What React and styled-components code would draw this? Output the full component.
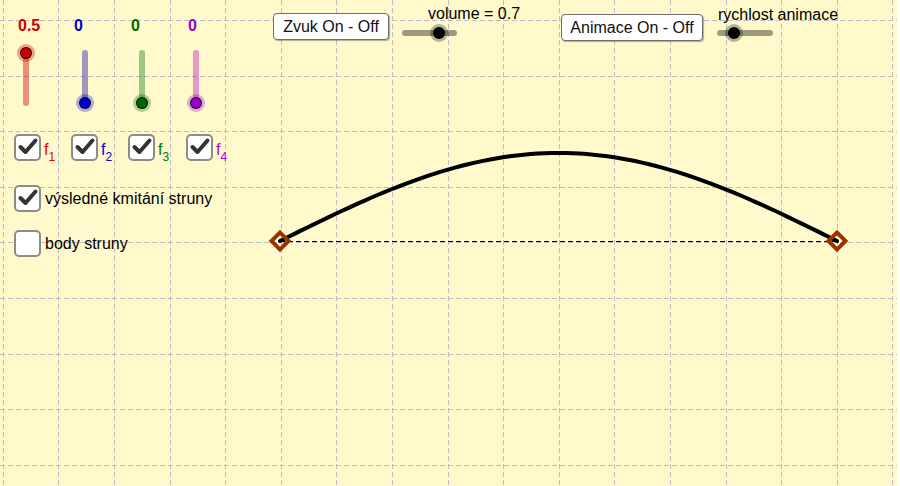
import React from "react";
import styled, { createGlobalStyle } from "styled-components";

const Global = createGlobalStyle`
  html, body { margin: 0; padding: 0; background: #ffffff; }
  body { font-family: "Liberation Sans", Arial, sans-serif; }
`;

const BG = "#FFF9CC";
const W = 897;
const H = 486;

const Stage = styled.div`
  position: relative;
  width: ${W}px;
  height: ${H}px;
  background: ${BG};
  overflow: hidden;
  font-family: "Liberation Sans", Arial, sans-serif;
  color: #000;
`;

const Canvas = styled.svg`
  position: absolute;
  left: 0;
  top: 0;
  width: ${W}px;
  height: ${H}px;
  display: block;
`;

const Layout = styled.div`
  position: relative;
  display: flex;
  align-items: flex-start;
`;

const LeftPanel = styled.div`
  width: 273px;
  flex: none;
  display: flex;
  flex-direction: column;
`;

const SliderRow = styled.div`
  display: flex;
  padding-left: 18px;
  padding-top: 17px;
`;

const SliderCol = styled.div`
  width: ${(p) => p.$w}px;
  display: flex;
  flex-direction: column;
  align-items: flex-start;
`;

const ValueLabel = styled.div`
  font-size: 16px;
  font-weight: bold;
  line-height: 18px;
  color: ${(p) => p.$color};
`;

const VTrack = styled.div`
  position: relative;
  margin-top: 15px;
  margin-left: ${(p) => p.$x}px;
  width: 6px;
  height: 56px;
  border-radius: 3px;
  background: ${(p) => p.$track};
`;

const HTrack = styled.div`
  position: relative;
  margin-top: ${(p) => p.$top}px;
  width: ${(p) => p.$w}px;
  height: 6px;
  border-radius: 3px;
  background: rgba(0, 0, 0, 0.38);
`;

const Thumb = styled.div`
  position: absolute;
  width: 12px;
  height: 12px;
  box-sizing: border-box;
  border-radius: 50%;
  background: ${(p) => p.$color};
  border: 1px solid rgba(0, 0, 0, 0.8);
  box-shadow: 0 0 0 3px ${(p) => p.$halo};
`;

const FRow = styled.div`
  display: flex;
  padding-left: 14px;
  margin-top: 28px;
`;

const CheckItem = styled.div`
  display: flex;
  align-items: ${(p) => (p.$top ? "flex-start" : "center")};
  gap: ${(p) => p.$gap || 3}px;
  width: ${(p) => (p.$w ? `${p.$w}px` : "auto")};
  padding-left: ${(p) => p.$pl || 0}px;
  margin-top: ${(p) => p.$mt || 0}px;
`;

const Box = styled.div`
  width: 27px;
  height: 27px;
  box-sizing: border-box;
  border: 2px solid #8d8d88;
  border-radius: 5px;
  background: #ffffff;
  flex: none;
  display: flex;
  align-items: center;
  justify-content: center;
`;

const CheckText = styled.span`
  font-size: 16px;
  line-height: 18px;
  white-space: nowrap;
  color: #000;
`;

const FLabel = styled.span`
  font-size: 16px;
  line-height: 18px;
  margin-top: 7px;
  color: ${(p) => p.$color};
  white-space: nowrap;
`;

const Sub = styled.sub`
  font-size: 12px;
  line-height: 1;
  vertical-align: -6px;
`;

const Toolbar = styled.div`
  display: flex;
  align-items: flex-start;
`;

const Button = styled.button`
  margin-top: ${(p) => p.$top}px;
  width: ${(p) => p.$w}px;
  height: 27px;
  padding: 0;
  box-sizing: border-box;
  border: 1px solid #6e6e6e;
  border-radius: 4px;
  background: #ffffff;
  box-shadow: 1px 1px 1px rgba(0, 0, 0, 0.3);
  font-family: "Liberation Sans", Arial, sans-serif;
  font-size: 16px;
  line-height: 18px;
  color: #111;
  flex: none;
`;

const HGroup = styled.div`
  display: flex;
  flex-direction: column;
  align-items: flex-start;
  width: ${(p) => p.$w}px;
  margin-left: ${(p) => p.$ml}px;
  flex: none;
`;

const HLabel = styled.div`
  font-size: 16px;
  line-height: 18px;
  margin-top: ${(p) => p.$top}px;
  margin-left: ${(p) => p.$left}px;
  white-space: nowrap;
`;

const CheckSvg = styled.svg`
  margin: -2px;
  display: block;
`;

const Check = () => (
  <CheckSvg width="27" height="27" viewBox="0 0 27 27">
    <path
      d="M6.5 13 L11.5 18 L21.5 6.5"
      fill="none"
      stroke="#333333"
      strokeWidth="4"
      strokeLinecap="round"
      strokeLinejoin="round"
    />
  </CheckSvg>
);

const sliders = [
  { label: "0.5", color: "#CC0000", track: "rgba(204,0,0,0.42)", halo: "rgba(204,0,0,0.35)", w: 56, x: 5, frac: 1 },
  { label: "0", color: "#0000CC", track: "rgba(0,0,160,0.38)", halo: "rgba(0,0,204,0.3)", w: 57, x: 8, frac: 0 },
  { label: "0", color: "#006600", track: "rgba(0,120,0,0.38)", halo: "rgba(0,102,0,0.3)", w: 57, x: 8, frac: 0 },
  { label: "0", color: "#9900CC", track: "rgba(190,0,180,0.38)", halo: "rgba(153,0,204,0.3)", w: 56, x: 5, frac: 0 },
];

const fChecks = [
  { n: "1", color: "#DD0000", w: 57 },
  { n: "2", color: "#0000DD", w: 57 },
  { n: "3", color: "#007700", w: 58 },
  { n: "4", color: "#AA00DD", w: 58 },
];

function VSlider({ s }) {
  const top = 3 + (1 - s.frac) * 50 - 6;
  return (
    <SliderCol $w={s.w}>
      <ValueLabel $color={s.color}>{s.label}</ValueLabel>
      <VTrack $x={s.x} $track={s.track}>
        <Thumb $color={s.color} $halo={s.halo} style={{ left: -3, top }} />
      </VTrack>
    </SliderCol>
  );
}

function HSlider({ label, w, frac, groupW, ml, labelTop, labelLeft, trackTop }) {
  const left = 3 + frac * (w - 6) - 6;
  return (
    <HGroup $w={groupW} $ml={ml}>
      <HLabel $top={labelTop} $left={labelLeft}>{label}</HLabel>
      <HTrack $w={w} $top={trackTop}>
        <Thumb $color="#000" $halo="rgba(0,0,0,0.28)" style={{ left, top: -3 }} />
      </HTrack>
    </HGroup>
  );
}

function Drawing() {
  const vx = [];
  for (let k = 0; k <= 16; k++) vx.push(Math.round(2.7 + 55.6 * k) + 0.5);
  const hy = [];
  for (let k = 0; k <= 8; k++) hy.push(Math.round(20 + 55.6 * k) + 0.5);
  const N = 80;
  const pts = [];
  for (let i = 0; i <= N; i++) {
    const x = 280 + (557 * i) / N;
    const y = 241 - 88 * Math.sin((Math.PI * i) / N);
    pts.push(`${x.toFixed(2)},${y.toFixed(2)}`);
  }
  return (
    <Canvas viewBox={`0 0 ${W} ${H}`}>
      <g stroke="#BDBDC2" strokeWidth="1" strokeDasharray="5 3">
        {vx.map((x) => (
          <line key={`v${x}`} x1={x} y1={0} x2={x} y2={H} />
        ))}
        {hy.map((y) => (
          <line key={`h${y}`} x1={0} y1={y} x2={W} y2={y} />
        ))}
      </g>
      <line x1="280" y1="241.5" x2="837" y2="241.5" stroke="#000" strokeWidth="1" strokeDasharray="5 3" />
      <polyline points={pts.join(" ")} fill="none" stroke="#000" strokeWidth="4" strokeLinecap="round" strokeLinejoin="round" />
      {[280, 837].map((x) => (
        <rect
          key={x}
          x={-6}
          y={-6}
          width={12}
          height={12}
          transform={`translate(${x} 241) rotate(45)`}
          fill="none"
          stroke="#993300"
          strokeWidth="4"
        />
      ))}
    </Canvas>
  );
}

export default function App() {
  return (
    <>
      <Global />
      <Stage>
        <Drawing />
        <Layout>
          <LeftPanel>
            <SliderRow>
              {sliders.map((s, i) => (
                <VSlider key={i} s={s} />
              ))}
            </SliderRow>
            <FRow>
              {fChecks.map((f) => (
                <CheckItem key={f.n} $w={f.w} $top>
                  <Box>
                    <Check />
                  </Box>
                  <FLabel $color={f.color}>
                    f<Sub>{f.n}</Sub>
                  </FLabel>
                </CheckItem>
              ))}
            </FRow>
            <CheckItem $pl={14} $mt={22} $gap={4}>
              <Box>
                <Check />
              </Box>
              <CheckText>výsledné kmitání struny</CheckText>
            </CheckItem>
            <CheckItem $pl={14} $mt={18} $gap={4}>
              <Box />
              <CheckText>body struny</CheckText>
            </CheckItem>
          </LeftPanel>
          <Toolbar>
            <Button $top={13} $w={116}>Zvuk On - Off</Button>
            <HSlider label="volume = 0.7" w={55} frac={0.7} groupW={159} ml={13} labelTop={5} labelLeft={26} trackTop={7} />
            <Button $top={14} $w={142}>Animace On - Off</Button>
            <HSlider label="rychlost animace" w={56} frac={0.28} groupW={140} ml={14} labelTop={6} labelLeft={1} trackTop={6} />
          </Toolbar>
        </Layout>
      </Stage>
    </>
  );
}
